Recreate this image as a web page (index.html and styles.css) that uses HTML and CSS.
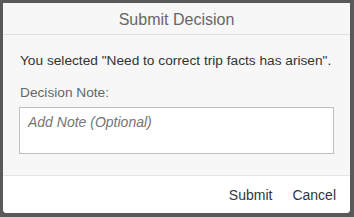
FILE: index.html
```html
<!DOCTYPE html>
<html>
<head>
    <title>Submit Decision</title>
    <link rel="stylesheet" href="styles.css">
</head>
<body>
    <div class="dialog">
        <div class="dialog-header">Submit Decision</div>
        <div class="dialog-body">
            <p class="selected-text">You selected "Need to correct trip facts has arisen".</p>
            <label class="note-label" for="note">Decision Note:</label>
            <textarea id="note" class="note-input" placeholder="Add Note (Optional)"></textarea>
        </div>
        <div class="dialog-footer">
            <button class="footer-btn">Submit</button>
            <button class="footer-btn">Cancel</button>
        </div>
    </div>
</body>
</html>
```

FILE: styles.css
```css
html, body { margin: 0; height: 100%; }
body { background: #595959; font-family: "Liberation Sans", Arial, sans-serif; padding: 3px 4px 4px 3px; box-sizing: border-box; }
.dialog { background: #f7f7f7; width: 347px; height: 210px; border-radius: 0 0 4px 4px; display: flex; flex-direction: column; overflow: hidden; }
.dialog-header { height: 31px; border-bottom: 1px solid #e0e0e0; text-align: center; font-size: 16px; line-height: 33px; color: #666666; }
.dialog-body { flex: 1; padding: 18px 16px 0 17px; }
.selected-text { margin: 0; font-size: 13.7px; line-height: 16px; color: #333333; white-space: nowrap; }
.note-label { display: block; margin-top: 16px; font-size: 13.7px; line-height: 16px; color: #666666; }
.note-input { display: block; box-sizing: border-box; width: 315px; height: 47px; margin: 6px 0 0 -1px; border: 1px solid #bfbfbf; border-radius: 0; background: #ffffff; padding: 6px 8px; font-family: inherit; font-size: 14px; resize: none; }
.note-input::placeholder { color: #757575; font-style: italic; }
.dialog-footer { height: 37px; border-top: 1px solid #e5e5e5; background: #ffffff; display: flex; justify-content: flex-end; align-items: center; padding-right: 6px; gap: 4px; }
.footer-btn { background: none; border: none; font-family: inherit; font-size: 14px; color: #32363a; padding: 0 8px; height: 30px; }
```
